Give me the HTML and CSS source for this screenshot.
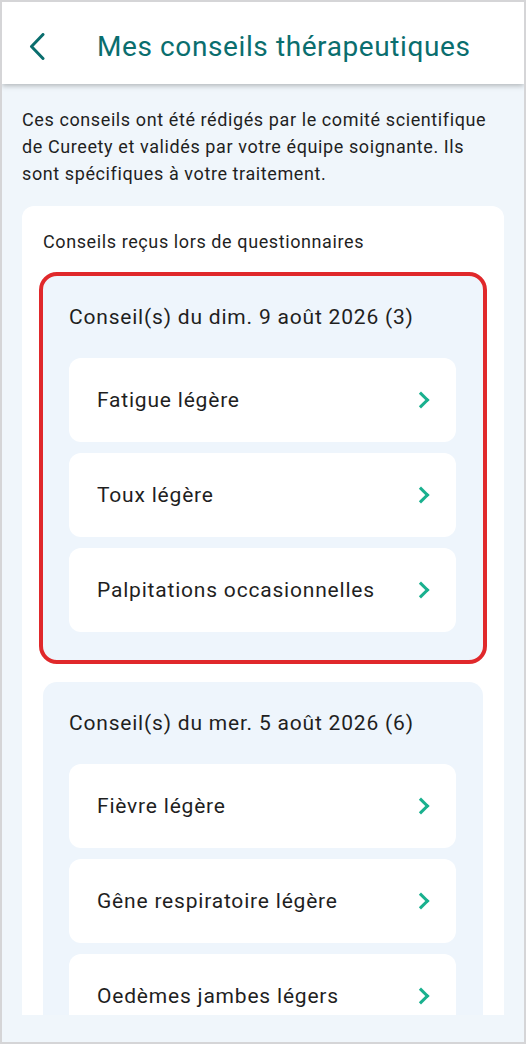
FILE: index.html
```html
<!DOCTYPE html>
<html lang="fr">
<head>
  <meta charset="UTF-8" />
  <meta name="viewport" content="width=device-width, initial-scale=1.0"/>
  <title>Mes conseils thérapeutiques</title>
  <link rel="stylesheet" href="styles.css">
</head>
<body>
  <div class="screen">

    <!-- Header -->
    <header class="topbar">
      <a class="back" href="#" aria-label="Retour">
        <svg width="16" height="27" viewBox="0 0 16 27">
          <path d="M14 1.5 L2.5 13.5 L14 25.5" fill="none" stroke="#0a6e6e" stroke-width="3" stroke-linecap="round" stroke-linejoin="round"/>
        </svg>
      </a>
      <h1>Mes conseils thérapeutiques</h1>
    </header>

    <main class="content">
      <p class="intro">Ces conseils ont été rédigés par le comité scientifique de Cureety et validés par votre équipe soignante. Ils sont spécifiques à votre traitement.</p>

      <section class="card">
        <h2>Conseils reçus lors de questionnaires</h2>

        <div class="group highlight">
          <h3>Conseil(s) du dim. 9 août 2026 (3)</h3>
          <ul class="advice-list">
            <li><a href="#">Fatigue légère<span class="chev"></span></a></li>
            <li><a href="#">Toux légère<span class="chev"></span></a></li>
            <li><a href="#">Palpitations occasionnelles<span class="chev"></span></a></li>
          </ul>
        </div>

        <div class="group">
          <h3>Conseil(s) du mer. 5 août 2026 (6)</h3>
          <ul class="advice-list">
            <li><a href="#">Fièvre légère<span class="chev"></span></a></li>
            <li><a href="#">Gêne respiratoire légère<span class="chev"></span></a></li>
            <li><a href="#">Oedèmes jambes légers<span class="chev"></span></a></li>
          </ul>
        </div>
      </section>
    </main>

  </div>
</body>
</html>
```

FILE: styles.css
```css
body {
  margin: 0;
  padding: 0;
  font-family: Roboto, 'Noto Sans', sans-serif;
  color: #1f1f1f;
}

.screen {
  box-sizing: border-box;
  width: 526px;
  height: 1044px;
  border: 2px solid #d5d5d7;
  background-color: #f0f6fb;
  display: flex;
  flex-direction: column;
  overflow: hidden;
}

.topbar {
  flex: none;
  box-sizing: border-box;
  height: 82px;
  padding: 7px 0 0 27px;
  background-color: white;
  display: flex;
  align-items: center;
  box-shadow: 0 2px 5px rgba(0, 0, 0, 0.25);
  position: relative;
  z-index: 10;
}

.back {
  display: flex;
  width: 16px;
  height: 27px;
  margin-right: 52px;
}

.topbar h1 {
  margin: 0;
  font-size: 28px;
  font-weight: 400;
  letter-spacing: 0.6px;
  color: #0a6e6e;
}

.content {
  flex: 1;
  min-height: 0;
  padding: 0 20px;
  margin-bottom: 27px;
  overflow: hidden;
}

.intro {
  margin: 22px 0 19px;
  font-size: 18px;
  line-height: 27px;
  letter-spacing: 0.6px;
}

.card {
  background-color: white;
  border-radius: 12px;
  padding: 25px 21px 30px;
}

.card h2 {
  margin: 0 0 23px;
  font-size: 18px;
  font-weight: 400;
  line-height: 22px;
  letter-spacing: 0.6px;
}

.group {
  background-color: #eef5fc;
  border-radius: 14px;
  padding: 29px 27px 28px 26px;
  margin-bottom: 22px;
}

.group.highlight {
  outline: 4px solid #e0282b;
  outline-offset: 0;
}

.group h3 {
  margin: 0 0 29px;
  font-size: 21px;
  font-weight: 400;
  line-height: 24px;
  letter-spacing: 0.8px;
}

.advice-list {
  list-style: none;
  margin: 0;
  padding: 0;
  display: flex;
  flex-direction: column;
  gap: 11px;
}

.advice-list a {
  display: flex;
  justify-content: space-between;
  align-items: center;
  height: 84px;
  box-sizing: border-box;
  padding: 0 29px 0 28px;
  background-color: white;
  border-radius: 12px;
  color: #1f1f1f;
  text-decoration: none;
  font-size: 21px;
  letter-spacing: 0.8px;
}

.chev {
  width: 9px;
  height: 9px;
  border-top: 3px solid #19b08e;
  border-right: 3px solid #19b08e;
  transform: rotate(45deg);
}
```
